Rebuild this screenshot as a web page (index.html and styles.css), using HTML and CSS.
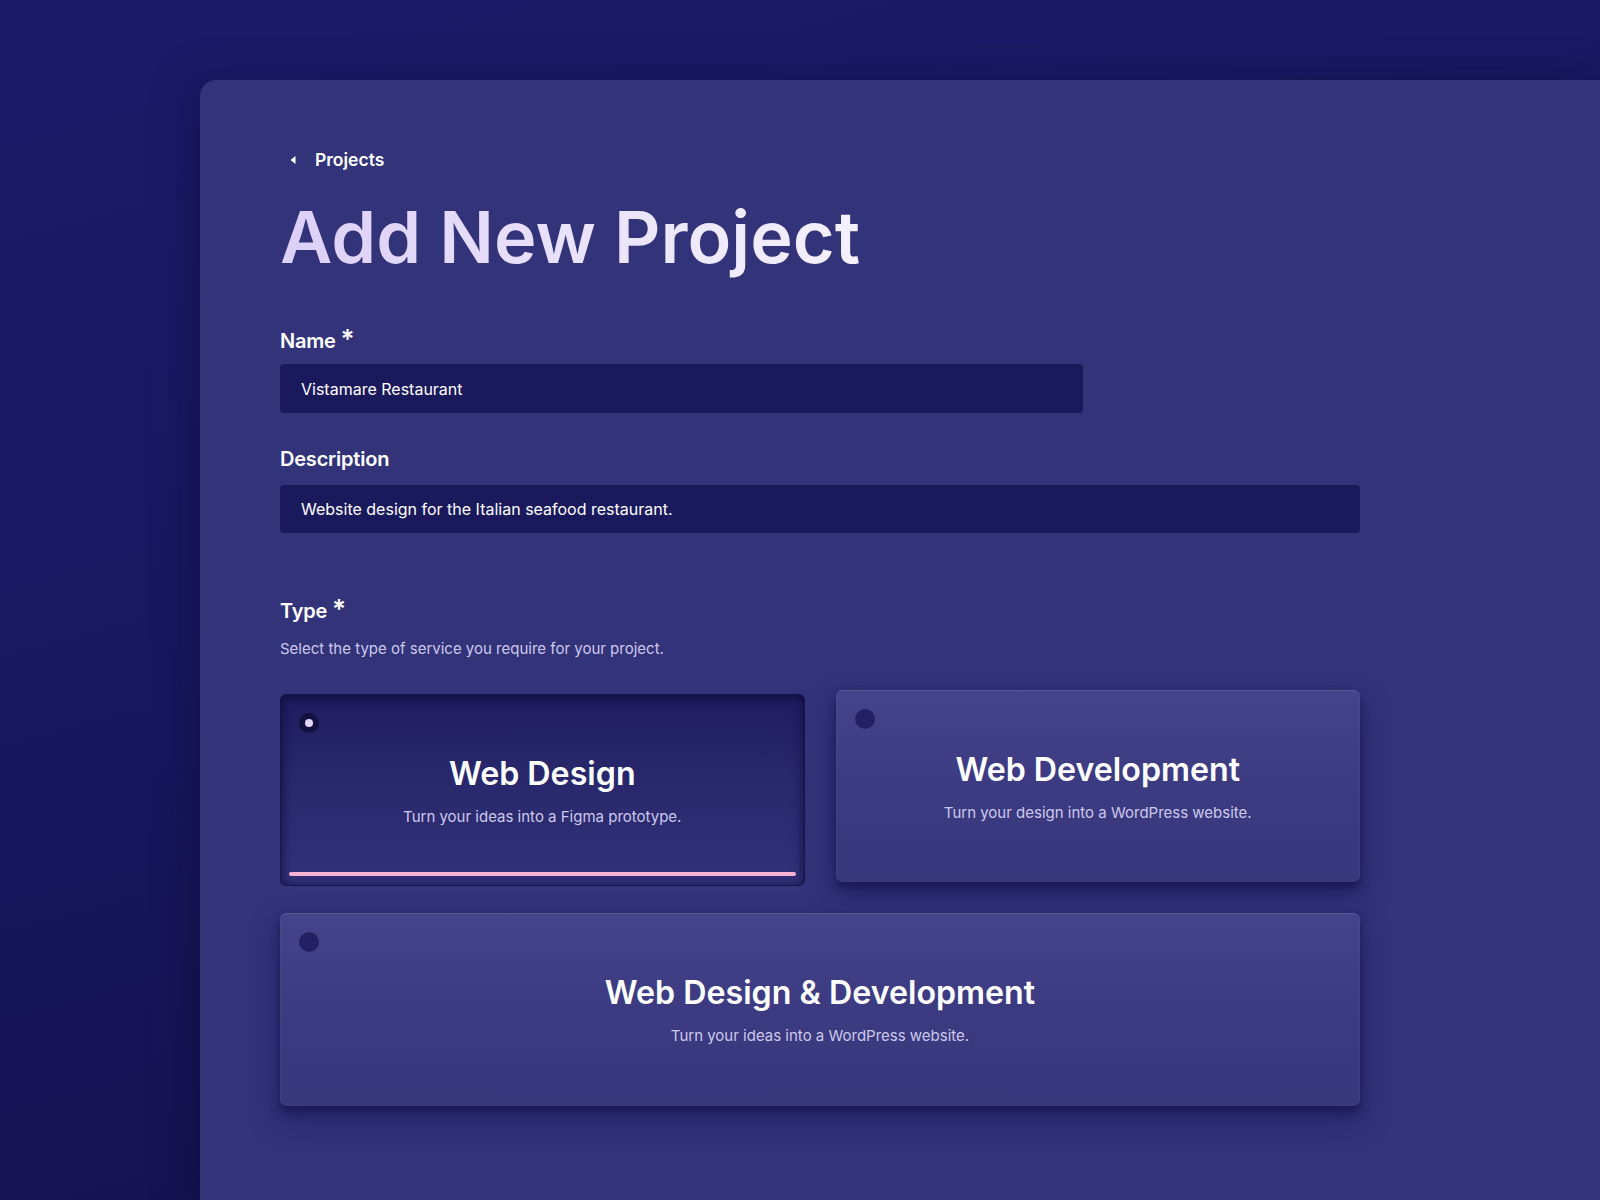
FILE: index.html
```html
<!DOCTYPE html>
<html lang="en">
<head>
<meta charset="utf-8">
<title>Add New Project</title>
<link rel="stylesheet" href="styles.css">
</head>
<body>
<div class="page">
  <main class="panel">
    <nav class="crumbs">
      <a class="crumb" href="#">
        <svg class="crumb-icon" width="6" height="8" viewBox="0 0 6 8"><polygon points="5.5,0 5.5,8 0.5,4" fill="#ffffff"/></svg>
        <span>Projects</span>
      </a>
    </nav>
    <h1 class="title">Add New Project</h1>

    <form class="form">
      <div class="field">
        <label class="label">Name <span class="req">*</span></label>
        <div class="input input-name">Vistamare Restaurant</div>
      </div>
      <div class="field">
        <label class="label">Description</label>
        <div class="input input-desc">Website design for the Italian seafood restaurant.</div>
      </div>

      <div class="field type-field">
        <label class="label">Type <span class="req">*</span></label>
        <p class="help">Select the type of service you require for your project.</p>
        <div class="cards">
          <div class="card card-selected">
            <span class="radio radio-on"><span class="radio-dot"></span></span>
            <h2 class="card-title">Web Design</h2>
            <p class="card-text">Turn your ideas into a Figma prototype.</p>
            <span class="card-bar"></span>
          </div>
          <div class="card">
            <span class="radio"></span>
            <h2 class="card-title">Web Development</h2>
            <p class="card-text">Turn your design into a WordPress website.</p>
          </div>
          <div class="card card-wide">
            <span class="radio"></span>
            <h2 class="card-title">Web Design &amp; Development</h2>
            <p class="card-text">Turn your ideas into a WordPress website.</p>
          </div>
        </div>
      </div>
    </form>
  </main>
</div>
</body>
</html>
```

FILE: styles.css
```css
* { box-sizing: border-box; }

html, body {
  margin: 0;
  padding: 0;
  height: 1200px;
  overflow: hidden;
}

body {
  font-family: "Inter", "Noto Sans", sans-serif;
  color: #ffffff;
  background: linear-gradient(165deg, #1c1b6a 0%, #18175f 45%, #121049 100%);
}

.page {
  padding: 80px 0 0 200px;
  height: 1200px;
}

.panel {
  height: 1120px;
  background: #33337a;
  border-top-left-radius: 16px;
  padding: 68px 0 0 80px;
  box-shadow: -8px 0 40px rgba(10, 8, 40, 0.35);
}

.crumbs {
  display: flex;
  height: 24px;
}

.crumb {
  display: inline-flex;
  align-items: center;
  gap: 19px;
  color: #ffffff;
  text-decoration: none;
  font-size: 17.5px;
  font-weight: 600;
  line-height: 24px;
  padding-left: 10px;
}

.crumb-icon { display: block; }

.title {
  margin: 22px 0 0 0;
  width: fit-content;
  font-size: 72px;
  line-height: 86px;
  font-weight: 600;
  letter-spacing: 0;
  background: linear-gradient(90deg, #dccff8 0%, #e9e2fb 50%, #f4f0fd 100%);
  -webkit-background-clip: text;
  background-clip: text;
  color: transparent;
}

.form {
  width: 1080px;
  margin-top: 46px;
  display: flex;
  flex-direction: column;
}

.field {
  display: flex;
  flex-direction: column;
}

.field + .field { margin-top: 32px; }
.field.type-field { margin-top: 63px; }

.label {
  font-size: 20px;
  line-height: 28px;
  font-weight: 600;
  height: 28px;
  letter-spacing: -0.2px;
}

.req {
  font-size: 26px;
  line-height: 1;
  font-weight: 600;
}

.input {
  margin-top: 10px;
  height: 49px;
  background: #1a195c;
  border-radius: 4px;
  padding: 0 21px;
  display: flex;
  align-items: center;
  font-size: 16px;
  color: #ffffff;
}

.input-name { width: 803px; }
.input-desc { width: 1080px; height: 48px; margin-top: 12px; }

.help {
  margin: 14px 0 0 0;
  font-size: 15px;
  line-height: 22px;
  color: #cdc9ec;
}

.cards {
  margin-top: 30px;
  display: grid;
  grid-template-columns: 1fr 1fr;
  column-gap: 31px;
  row-gap: 31px;
}

.card {
  position: relative;
  height: 192px;
  border-radius: 7px;
  padding-top: 60px;
  text-align: center;
  background: linear-gradient(180deg, #45448a 0%, #3c3b81 50%, #37377c 100%);
  box-shadow:
    inset 0 1px 0 rgba(255, 255, 255, 0.09),
    inset 0 0 0 1px rgba(255, 255, 255, 0.03),
    0 6px 10px rgba(18, 16, 72, 0.65),
    0 14px 30px rgba(20, 18, 80, 0.45);
}

.card-wide {
  grid-column: 1 / span 2;
  height: 193px;
}

.card-selected {
  transform: translateY(4px);
  background: linear-gradient(180deg, #1f1d60 0%, #29286c 45%, #32327a 100%);
  box-shadow:
    inset 0 0 0 1px rgba(20, 18, 70, 0.7),
    inset 0 3px 10px rgba(14, 12, 55, 0.7),
    inset 0 0 14px rgba(14, 12, 55, 0.45);
}

.radio {
  position: absolute;
  left: 19px;
  top: 19px;
  width: 20px;
  height: 20px;
  border-radius: 50%;
  background: #232163;
  display: flex;
  align-items: center;
  justify-content: center;
}

.radio-on { background: #13113f; }

.radio-dot {
  width: 8px;
  height: 8px;
  border-radius: 50%;
  background: #e2d6ff;
}

.card-title {
  margin: 0;
  font-size: 32.2px;
  line-height: 40px;
  font-weight: 600;
  color: #ffffff;
  letter-spacing: 0;
}

.card-text {
  margin: 12px 0 0 0;
  font-size: 15px;
  line-height: 22px;
  color: #cdc9ec;
}

.card-bar {
  position: absolute;
  left: 9px;
  right: 9px;
  bottom: 10px;
  height: 4px;
  border-radius: 2px;
  background: #f7b3d3;
}
```
